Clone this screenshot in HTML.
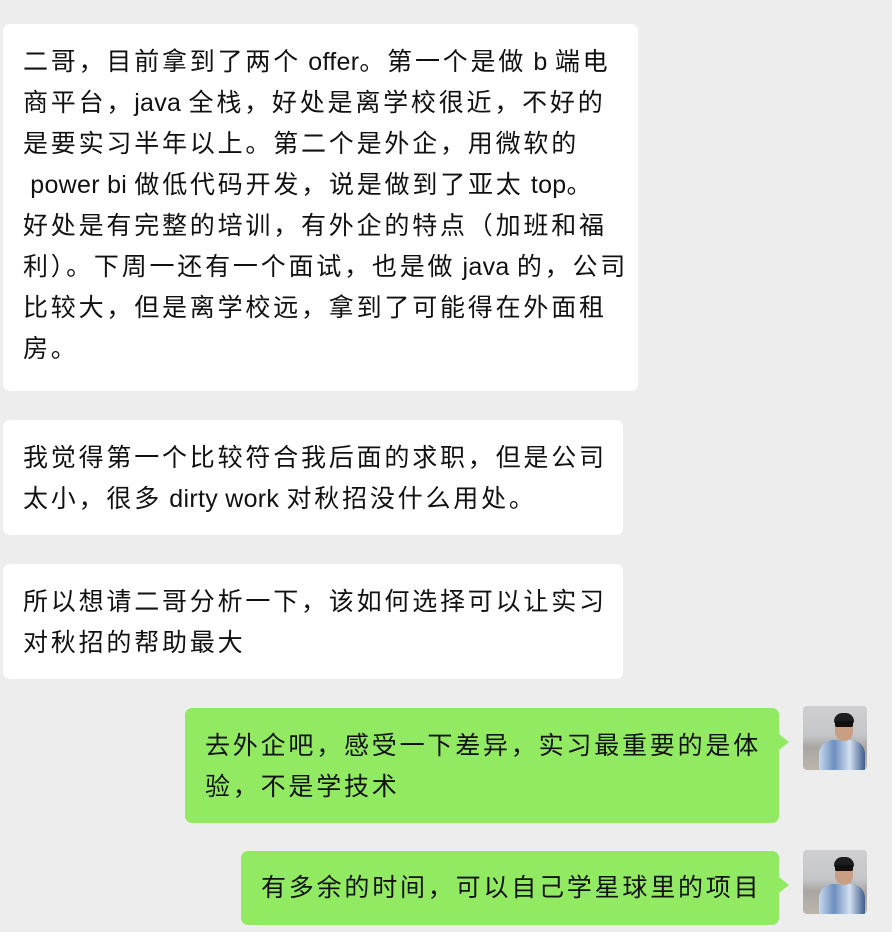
<!DOCTYPE html>
<html><head><meta charset="utf-8"><style>
body{margin:0;width:892px;height:932px;background:#ededed;position:relative;overflow:hidden;font-family:"Liberation Sans","Noto Sans CJK SC",sans-serif;font-size:25px;letter-spacing:2.8px;color:#111;}
i{font-style:normal;letter-spacing:0.3px;}
.b{position:absolute;background:#fff;border-radius:7px;box-sizing:border-box;padding:0 0 0 20px;line-height:41px;white-space:nowrap;}
.g{background:#92ea62;}
.g:after{content:"";position:absolute;right:-10px;top:26px;border:8px solid transparent;border-left:10px solid #92ea62;border-right:0;}
.av{position:absolute;left:803px;width:64px;height:64px;border-radius:4px;overflow:hidden;background:linear-gradient(#cfcfd2 0%,#c5c6c9 45%,#a9a6a2 65%,#bdb6ac 100%);}
.av .p{position:absolute;left:16px;top:34px;width:46px;height:32px;border-radius:14px 14px 0 0;background:linear-gradient(90deg,#c7d8ec,#6d8fbf,#d3e0ef,#3e5c8e);}
.av .h{position:absolute;left:32px;top:9px;width:18px;height:26px;border-radius:9px;background:#c99f83;}
.av .hr{position:absolute;left:31px;top:7px;width:20px;height:10px;border-radius:10px 10px 2px 2px;background:#1d1d1d;}
.av .gl{position:absolute;left:32px;top:15px;width:18px;height:6px;background:#111;border-radius:2px;}
</style></head><body>
<div class="b" style="left:3px;top:24px;width:635px;height:367px;padding-top:18px;">二哥，目前拿到了两个<i> offer</i>。第一个是做<i> b </i>端电<br>商平台，<i>java </i>全栈，好处是离学校很近，不好的<br>是要实习半年以上。第二个是外企，用微软的<br><i>&nbsp;power bi </i>做低代码开发，说是做到了亚太<i> top</i>。<br>好处是有完整的培训，有外企的特点（加班和福<br>利）。下周一还有一个面试，也是做<i> java </i>的，公司<br>比较大，但是离学校远，拿到了可能得在外面租<br>房。</div>
<div class="b" style="left:3px;top:420px;width:620px;height:115px;padding-top:18px;">我觉得第一个比较符合我后面的求职，但是公司<br>太小，很多<i> dirty work </i>对秋招没什么用处。</div>
<div class="b" style="left:3px;top:564px;width:620px;height:115px;padding-top:18px;">所以想请二哥分析一下，该如何选择可以让实习<br>对秋招的帮助最大</div>
<div class="b g" style="left:185px;top:708px;width:594px;height:115px;padding-top:18px;">去外企吧，感受一下差异，实习最重要的是体<br>验，不是学技术</div>
<div class="b g" style="left:241px;top:851px;width:538px;height:74px;padding-top:17px;">有多余的时间，可以自己学星球里的项目</div>
<div class="av" style="top:706px;"><div class="p"></div><div class="h"></div><div class="hr"></div><div class="gl"></div></div>
<div class="av" style="top:850px;"><div class="p"></div><div class="h"></div><div class="hr"></div><div class="gl"></div></div>
</body></html>
